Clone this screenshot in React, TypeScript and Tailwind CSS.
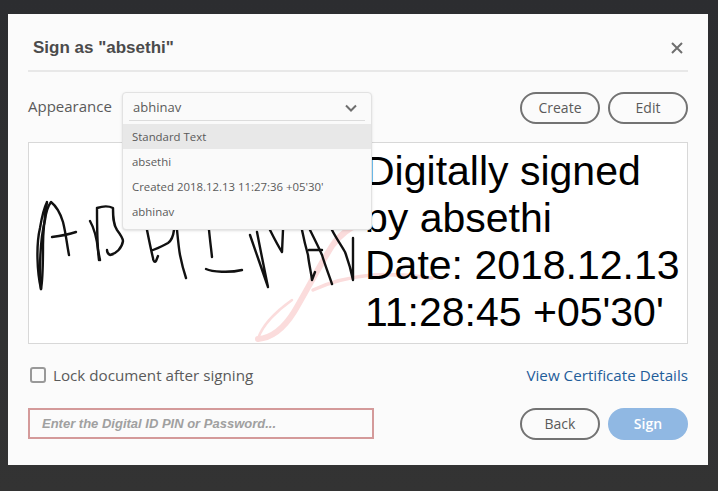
const signatureStrokes = [
  "M41 289C37 272 36 245 40 228C42 216 44 208 47 202C45 215 43 228 43 245C43 262 43 278 41 289",
  "M41 289C39 270 40 240 45 220C46 212 48 206 51 202C56 206 60 212 63 222C66 234 67 245 69 255",
  "M52 237C60 236 67 235 76 232",
  "M90 221C94 228 97 240 98 250L100 260",
  "M97 208C97 225 97 245 99 260M97 208C103 206 109 206 113 208C113 216 113 224 117 230C120 234 123 238 123 241C122 248 116 254 110 255C108 254 107 252 107 250",
  "M147 230C149 240 151 250 153 258C153 261 155 263 156 261L158 256M153 250C158 248 163 246 168 243C171 241 173 238 174 230",
  "M177 230C178 240 179 250 180 255C182 265 184 272 186 278",
  "M209 230C210 240 211 248 212 257",
  "M206 269C212 272 230 273 242 270",
  "M250 235C256 252 262 270 268 287C265 272 262 258 257 232M270 230C274 238 278 246 282 252L283 230",
  "M302 230C304 240 306 248 308 255C309 264 311 272 312 280L315 272M309 250L322 250",
  "M310 230C315 240 319 248 322 255C325 265 329 275 332 284",
  "M332 230C336 238 341 245 345 252C348 260 351 270 353 280L353 238",
];

export default function App() {
  return (
    <div className="min-h-screen bg-gradient-to-b from-[#2c2d30] to-[#333333] pt-[14px] pl-2 font-['Open_Sans',sans-serif]">
      <div className="w-[700px] h-[451px] bg-[#fbfbfb] px-5 pt-[21px]">
        <div className="flex items-center justify-between h-[26px] border-b-2 border-[#e8e8e8] pb-[9px] box-content">
          <h1 className="pl-[5px] font-['Liberation_Sans',sans-serif] font-bold text-[17px] text-[#4b4b4b]">Sign as "absethi"</h1>
          <svg className="w-3 h-3 mr-[5px] text-[#6e6e6e]" viewBox="0 0 12 12" fill="none" stroke="currentColor" strokeWidth="2">
            <path d="M1 1l10 10M11 1L1 11" />
          </svg>
        </div>

        <div className="flex items-center mt-5 h-8 relative">
          <span className="text-[15px] text-[#5a5a5a] w-[94px] -mt-1">Appearance</span>
          <div className="absolute left-[94px] top-0 z-10 w-[250px] h-[138px] bg-[#fafafa] border border-[#e2e2e2] rounded shadow-sm">
            <div className="h-[28px] pt-[3px] mx-1.5 pl-1 pr-2 flex items-center justify-between border-b border-[#dcdcdc]">
              <span className="text-[13px] text-[#5a5a5a]">abhinav</span>
              <svg className="w-3 h-2 text-[#6e6e6e]" viewBox="0 0 12 8" fill="none" stroke="currentColor" strokeWidth="2">
                <path d="M1 1.5l5 5 5-5" />
              </svg>
            </div>
            <ul className="text-[11.4px] text-[#5a5a5a] mt-[3px]">
              <li className="h-[25px] pl-[9px] flex items-center bg-[#e8e8e8]">Standard Text</li>
              <li className="h-[25px] pl-[9px] flex items-center">absethi</li>
              <li className="h-[25px] pl-[9px] flex items-center">Created 2018.12.13 11:27:36 +05'30'</li>
              <li className="h-[25px] pl-[9px] flex items-center">abhinav</li>
            </ul>
          </div>
          <div className="ml-auto flex gap-2">
            <button className="w-20 h-8 rounded-full border-2 border-[#737373] text-sm text-[#5a5a5a]">Create</button>
            <button className="w-20 h-8 rounded-full border-2 border-[#737373] text-sm text-[#5a5a5a]">Edit</button>
          </div>
        </div>

        <div className="relative flex mt-[18px] h-[202px] bg-white border border-[#d8d8d8]">
          <svg className="absolute left-0 top-0 w-[658px] h-[200px]" viewBox="29 143 658 200" fill="none" stroke="#fbdcdc" strokeLinecap="round">
            <path d="M258 339C262 325 278 310 292 300" strokeWidth="2.5" />
            <path d="M258 339C272 338 284 328 294 312C306 292 318 268 332 246C340 234 350 228 362 222" strokeWidth="6" />
            <path d="M313 290C330 282 350 277 372 275C392 274 412 275 432 278" strokeWidth="3.5" />
          </svg>
          <svg className="w-[336px] h-[200px] shrink-0 relative" viewBox="29 143 336 200" fill="none" stroke="#111" strokeWidth="2.4" strokeLinecap="round" strokeLinejoin="round">
            {signatureStrokes.map((d) => (
              <path key={d} d={d} />
            ))}
          </svg>
          <p className="relative font-['Liberation_Sans',sans-serif] text-[41px] leading-[47px] text-black pt-[5px] whitespace-nowrap">
            Digitally signed
            <br />
            by absethi
            <br />
            Date: 2018.12.13
            <br />
            11:28:45 +05'30'
          </p>
        </div>

        <div className="flex items-center justify-between mt-[21px] h-5">
          <label className="flex items-center gap-[7px] pl-0.5 text-[15.2px] text-[#5a5a5a]">
            <span className="w-4 h-4 rounded-[3px] border-2 border-[#999999]" />
            Lock document after signing
          </label>
          <a className="text-[15.2px] text-[#1f5d9a]">View Certificate Details</a>
        </div>

        <div className="flex items-start justify-between mt-[23px]">
          <div className="w-[346px] h-[31px] border-2 border-[#d49a9a] flex items-center pl-3 font-['Liberation_Sans',sans-serif] italic font-bold text-[13px] text-[#a0a0a0]">
            Enter the Digital ID PIN or Password...
          </div>
          <div className="flex gap-2">
            <button className="w-20 h-8 rounded-full border-2 border-[#737373] text-sm text-[#5a5a5a]">Back</button>
            <button className="w-20 h-8 rounded-full bg-[#90b8e3] text-sm font-semibold text-white">Sign</button>
          </div>
        </div>
      </div>
    </div>
  );
}
